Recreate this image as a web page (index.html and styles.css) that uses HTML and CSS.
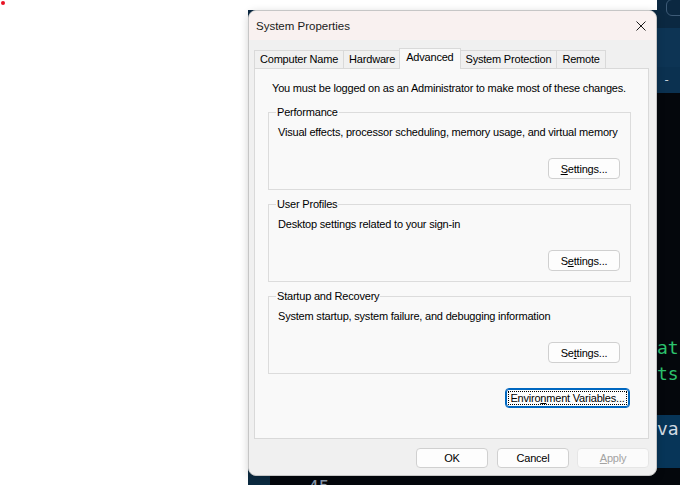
FILE: index.html
```html
<!DOCTYPE html>
<html lang="en">
<head>
<meta charset="utf-8">
<title>System Properties</title>
<link rel="stylesheet" href="styles.css">
</head>
<body>
<div class="dot"></div>

<div class="terminal">
  <div class="term-tabs"><div class="term-search"></div></div>
  <div class="term-head"></div>
  <div class="term-tool"><span class="term-dash">-</span></div>
  <div class="term-body">
    <div class="gutter"></div>
    <div class="code">
      <div class="line green first">at</div>
      <div class="line green">ts</div>
      <div class="line hl">va</div>
      <div class="line num">45</div>
    </div>
  </div>
</div>

<div class="dialog">
  <div class="titlebar">
    <span class="title">System Properties</span>
    <button class="close" aria-label="Close">
      <svg width="10" height="10" viewBox="0 0 10 10"><path d="M0.5 0.5 L9.5 9.5 M9.5 0.5 L0.5 9.5" stroke="#1b1b1b" stroke-width="1" fill="none"/></svg>
    </button>
  </div>
  <div class="content">
    <div class="tabs">
      <div class="tab">Computer Name</div>
      <div class="tab">Hardware</div>
      <div class="tab active">Advanced</div>
      <div class="tab">System Protection</div>
      <div class="tab">Remote</div>
    </div>
    <div class="panel">
      <p class="intro">You must be logged on as an Administrator to make most of these changes.</p>

      <fieldset class="group">
        <legend>Performance</legend>
        <p class="desc">Visual effects, processor scheduling, memory usage, and virtual memory</p>
        <div class="actions"><button class="btn btn-settings"><u>S</u>ettings...</button></div>
      </fieldset>

      <fieldset class="group">
        <legend>User Profiles</legend>
        <p class="desc">Desktop settings related to your sign-in</p>
        <div class="actions"><button class="btn btn-settings">S<u>e</u>ttings...</button></div>
      </fieldset>

      <fieldset class="group">
        <legend>Startup and Recovery</legend>
        <p class="desc">System startup, system failure, and debugging information</p>
        <div class="actions"><button class="btn btn-settings">Se<u>t</u>tings...</button></div>
      </fieldset>

      <div class="env-row">
        <button class="btn btn-env"><span class="focus">Enviro<u>n</u>ment Variables...</span></button>
      </div>
    </div>
    <div class="footer">
      <button class="btn btn-foot">OK</button>
      <button class="btn btn-foot">Cancel</button>
      <button class="btn btn-foot disabled"><u>A</u>pply</button>
    </div>
  </div>
</div>
</body>
</html>
```

FILE: styles.css
```css
* { box-sizing: border-box; }

html, body {
  margin: 0;
  padding: 0;
}

body {
  width: 680px;
  height: 485px;
  position: relative;
  overflow: hidden;
  background: #ffffff;
  font-family: "Liberation Sans", Arial, sans-serif;
  font-size: 11px;
  color: #000;
}

.dot {
  position: absolute;
  left: 1px;
  top: 1px;
  width: 4px;
  height: 4px;
  border-radius: 50%;
  background: #e81123;
}

/* ---------- background terminal window ---------- */
.terminal {
  position: absolute;
  left: 248px;
  top: 0;
  right: 0;
  bottom: 0;
  background: #04070c;
  display: flex;
  flex-direction: column;
  overflow: hidden;
  font-family: "DejaVu Sans Mono", monospace;
  clip-path: polygon(409px 0, 100% 0, 100% 100%, 0 100%, 0 10px, 409px 10px);
}

.term-tabs,
.term-head,
.term-tool {
  flex-shrink: 0;
}

.term-tabs {
  height: 28px;
  background: #0b2841;
  padding-left: 418px;
}

.term-search {
  width: 40px;
  height: 17px;
  margin-top: -1px;
  border: 1px solid #3e5b77;
  border-radius: 6px;
}

.term-head {
  height: 39px;
  background: #0d3454;
}

.term-tool {
  height: 26px;
  background: #0b3150;
  padding-left: 415px;
  color: #c3ccd6;
  font-size: 12px;
  line-height: 26px;
}

.term-body {
  flex: 1;
  min-height: 0;
  display: flex;
  overflow: hidden;
}

.gutter {
  width: 22px;
  background: #0b2a40;
}

.code {
  flex: 1;
  font-size: 18px;
}

.line {
  height: 26px;
  line-height: 26px;
  padding-left: 387px;
  white-space: pre;
}

.line.first { margin-top: 242px; }

.green { color: #2cc36e; }

.hl {
  height: 53px;
  margin-top: 28px;
  padding-top: 1px;
  background: #073558;
  color: #d3dbe3;
}

.num {
  margin-top: 6px;
  padding-left: 38px;
  color: #8b9aab;
}

/* ---------- dialog ---------- */
.dialog {
  position: absolute;
  left: 248px;
  top: 10px;
  width: 409px;
  height: 466px;
  border: 1px solid #c6c6c6;
  border-radius: 8px;
  background: #f0f0f0;
  overflow: hidden;
  box-shadow: 0 2px 8px rgba(0, 0, 0, 0.18);
  letter-spacing: -0.2px;
}

.titlebar {
  height: 29px;
  background: #f9f1f0;
  display: flex;
  align-items: center;
  padding-left: 7px;
}

.title {
  font-size: 11.5px;
  letter-spacing: 0;
  color: #1a1a1a;
}

.close {
  margin-left: auto;
  width: 30px;
  height: 29px;
  border: 0;
  padding: 0;
  background: transparent;
  display: flex;
  align-items: center;
  justify-content: center;
}

.content {
  padding: 8px 7px 0 5px;
}

.tabs {
  display: flex;
  align-items: flex-end;
  height: 20px;
}

.tab {
  height: 18px;
  line-height: 17px;
  padding: 0 5px;
  border: 1px solid #d9d9d9;
  border-bottom: 0;
  background: #f0f0f0;
  margin-right: -1px;
  white-space: nowrap;
}

.tab.active {
  height: 21px;
  margin-bottom: -1px;
  padding: 0 6px;
  margin-left: -1px;
  background: #f9f9f9;
  position: relative;
  z-index: 1;
}

.panel {
  height: 371px;
  border: 1px solid #d9d9d9;
  background: #f9f9f9;
  padding: 12px 17px 0 13px;
}

.intro {
  margin: 0;
  padding-left: 4px;
  line-height: 14px;
  white-space: nowrap;
}

.group {
  margin: 7px 0 0;
  padding: 0 10px 10px 9px;
  border: 1px solid #dcdcdc;
  min-width: 0;
}

.intro + .group { margin-top: 10px; }

.group legend {
  padding: 0 1px;
  margin-left: -2px;
  line-height: 14px;
}

.desc {
  margin: 6px 0 0;
  line-height: 14px;
  white-space: nowrap;
}

.actions {
  display: flex;
  justify-content: flex-end;
  margin-top: 19px;
}

.btn {
  font: inherit;
  letter-spacing: inherit;
  color: #000;
  background: #fdfdfd;
  border: 1px solid #d0d0d0;
  border-radius: 4px;
  padding: 0;
  text-align: center;
  white-space: nowrap;
}

.btn-settings {
  width: 72px;
  height: 21px;
}

.env-row {
  display: flex;
  justify-content: flex-end;
  margin-top: 14px;
  padding-right: 1px;
}

.btn-env {
  width: 125px;
  height: 20px;
  border-color: #0067c0;
  box-shadow: inset 0 0 0 1px #0067c0;
  padding: 2px;
}

.btn-env .focus {
  display: block;
  height: 14px;
  line-height: 12px;
  border: 1px dotted #000;
}

.footer {
  display: flex;
  justify-content: flex-end;
  gap: 8px;
  margin-top: 9px;
}

.btn-foot {
  width: 72px;
  height: 20px;
}

.btn-foot:first-child { margin-right: 1px; }

.btn-foot.disabled {
  color: #a3a3a3;
  border-color: #e6e6e6;
  background: #fbfbfb;
}
```
